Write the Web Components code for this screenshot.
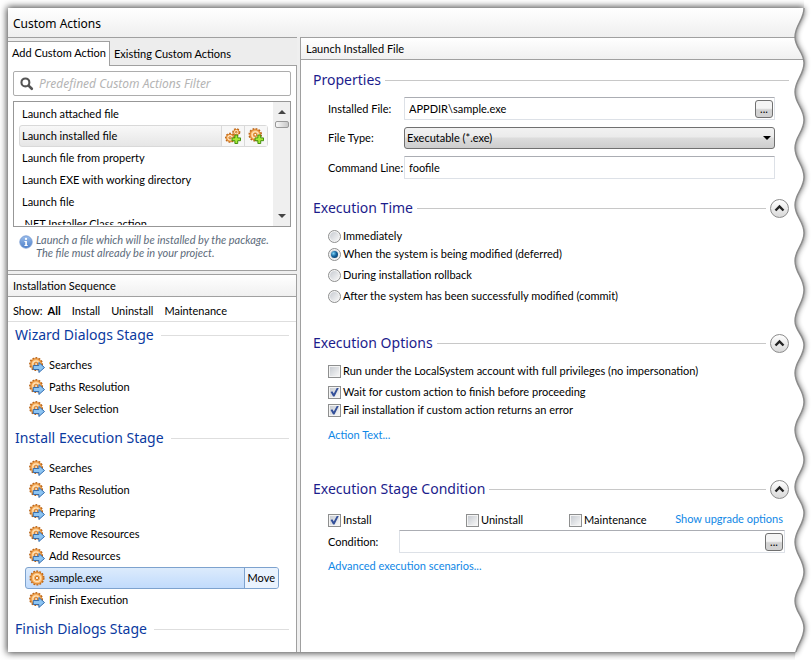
<!DOCTYPE html>
<html lang="en">
<head>
<meta charset="utf-8">
<title>Custom Actions</title>
<style>
  html { background: #fff; }
  body {
    --body: 11px/16px Lato, "Noto Sans", sans-serif;
    --head: 14px/20px "Noto Sans", sans-serif;
    --line: #a0a0a0;
    --link: #0f87e6;
    margin: 0; padding: 8px; color: #000; font: var(--body);
  }
</style>
</head>
<body>
<app-window heading="Custom Actions">
  <div slot="left" style="display:contents">
    <action-library></action-library>
    <install-sequence></install-sequence>
  </div>
  <action-properties slot="right"></action-properties>
</app-window>

<script>
const COMMON = `<style>
  * { box-sizing: border-box; }
  button, input, select { font: inherit; color: inherit; }
  button { background: none; border: 0; padding: 0; margin: 0; white-space: nowrap; }
  a { color: var(--link); text-decoration: none; }
</style>`;

function define(name, build) {
  customElements.define(name, class extends HTMLElement {
    constructor() {
      super();
      this.attachShadow({ mode: 'open' });
    }
    connectedCallback() {
      const t = document.createElement('template');
      t.innerHTML = COMMON + build(this);
      this.shadowRoot.replaceChildren(t.content.cloneNode(true));
    }
  });
}

const gear = (cx, cy, r) => `
  <circle cx="${cx}" cy="${cy}" r="${r}" fill="#f6b768" stroke="#b9651a" stroke-width="2" stroke-dasharray="1.9 1.3"/>
  <circle cx="${cx}" cy="${cy}" r="${r - 0.8}" fill="#fbc079" stroke="#e08a35" stroke-width="1.2"/>
  <circle cx="${cx}" cy="${cy}" r="${r * 0.52}" fill="#f5a74e" stroke="#ffe7c4" stroke-width="1.1"/>
  <circle cx="${cx}" cy="${cy}" r="${r * 0.24}" fill="#fff" stroke="#c96f1c" stroke-width="1"/>`;
const plus = `<path d="M10.5 7.5h3v3h3v3h-3v3h-3v-3h-3v-3h3z" fill="#a6ea35" stroke="#3d8a08" stroke-width="1"/>`;
const ICONS = {
  step: gear(7.5, 7.5, 6.4) + `<path d="M4.5 9h6V5.8l6 5.4-6 5.3v-3.2h-6z" fill="#8cc4f2" stroke="#2b66ad" stroke-width="1"/>`,
  gear: gear(8.5, 8.5, 7),
  add: gear(7.7, 7.2, 6.2) + plus,
  addmany: gear(12, 4.4, 3.3) + gear(5.4, 10.4, 4.4) + plus,
  info: `<defs><linearGradient id="g" x2="0" y2="1"><stop stop-color="#9dbfec"/><stop offset="1" stop-color="#4d7fc9"/></linearGradient></defs>
    <circle cx="8.5" cy="8.5" r="7.5" fill="url(#g)" stroke="#6d94d0"/>
    <circle cx="8.5" cy="4.8" r="1.4" fill="#fff"/><path d="M6.6 7.2h3v5h1v1.3H6.6v-1.3h1V8.5h-1z" fill="#fff"/>`,
  search: `<circle cx="6.8" cy="6.8" r="4.2" fill="none" stroke="#555" stroke-width="2.2"/><path d="M10.2 10.2l3.4 3.4" stroke="#555" stroke-width="2.8" stroke-linecap="round"/>`
};
define('app-icon', el => `
  <style>:host{display:block;flex:none;width:16px;height:16px} svg{display:block;width:100%;height:100%}</style>
  <svg viewBox="0 0 17 17" aria-hidden="true">${ICONS[el.getAttribute('name')]}</svg>`);

/* Wavy torn border along the window's right side, with its shadow. */
define('torn-edge', () => {
  const ys = [8, 37, 63, 92, 120, 148, 177, 205, 233, 261, 290, 321, 345, 373, 402, 430, 460, 487, 513, 542, 572, 601, 628, 658];
  let wave = 'M32 8';
  for (let i = 1; i < ys.length; i++) {
    const a = i % 2 ? 32 : 23, b = i % 2 ? 23 : 32, k = (ys[i] - ys[i - 1]) * 0.42;
    wave += ` C${a} ${ys[i - 1] + k} ${b} ${ys[i] - k} ${b} ${ys[i]}`;
  }
  return `
  <style>
    :host { position: absolute; top: -8px; right: -8px; bottom: -8px; width: 40px; pointer-events: none; }
    svg { display: block; width: 100%; height: 100%; }
  </style>
  <svg viewBox="0 0 40 660" preserveAspectRatio="none" aria-hidden="true">
    <defs>
      <clipPath id="out"><path d="M32 0V8${wave.slice(5)}L23 660H40V0z"/></clipPath>
      <clipPath id="rows"><rect x="-40" y="8" width="90" height="644"/></clipPath>
      <filter id="blur" x="-50%" y="-5%" width="200%" height="110%"><feGaussianBlur stdDeviation="3"/></filter>
    </defs>
    <g clip-path="url(#out)">
      <rect width="40" height="660" fill="#fff"/>
      <g filter="url(#blur)" opacity=".8"><g clip-path="url(#rows)"><path d="${wave}H-40V8z"/></g></g>
    </g>
    <g clip-path="url(#rows)"><path d="${wave}" fill="none" stroke="#8c8c8c" stroke-width="1.4"/></g>
  </svg>`;
});

define('app-window', el => `
  <style>
    :host { position: relative; display: flex; flex-direction: column; min-height: calc(100vh - 16px);
      background: #efefef; box-shadow: 0 0 7px 1px rgba(0,0,0,.75); }
    header { padding: 6px 5px 3px; background: linear-gradient(#fff, #efefef); }
    h1 { margin: 0; font: 12px/20px "Noto Sans", sans-serif; }
    .cols { flex: 1; display: flex; gap: 3px; }
    .left { flex: 0 0 289px; display: flex; flex-direction: column; gap: 3px; }
    .right { flex: 1; min-width: 0; display: flex; }
  </style>
  <header><h1>${el.getAttribute('heading')}</h1></header>
  <div class="cols"><div class="left"><slot name="left"></slot></div><main class="right"><slot name="right"></slot></main></div>
  <torn-edge></torn-edge>`);

define('panel-header', () => `
  <style>:host{display:block;padding:0 5px;border-top:1px solid var(--line);border-bottom:1px solid var(--line);background:linear-gradient(#fff,#f0f0f0)}
  h2{margin:0;font:inherit;line-height:21px}</style><h2><slot></slot></h2>`);

define('action-item', el => `
  <style>
    :host { display: flex; height: 22px; padding: 0 2px; line-height: 20px; border: 1px solid transparent; border-radius: 3px; }
    :host([selected]) { padding-right: 0; border-color: #d9d9d9; background: linear-gradient(#f8f8f8, #e6e6e6); }
    span { flex: 1; white-space: nowrap; }
    button { display: grid; place-items: center; width: 23px; border-left: 1px solid #d9d9d9; background: #f7f7f7; }
  </style>
  <span><slot></slot></span>
  ${el.hasAttribute('selected') ? `
  <button aria-label="Add with sequence"><app-icon name="addmany"></app-icon></button>
  <button aria-label="Add without sequence"><app-icon name="add"></app-icon></button>` : ''}`);

define('action-library', () => `
  <style>
    :host { display: block; border-top: 1px solid var(--line); }
    .tabs { display: flex; align-items: flex-end; height: 28px; background: #ededed; }
    .tabs button { height: 24px; padding: 0 3px 0 4px; border-bottom: 1px solid var(--line); }
    .tabs .on { height: 25px; padding-bottom: 2px; background: #fff; border: 1px solid var(--line); border-width: 1px 1px 0 0; }
    .tabs .rest { flex: 1; padding: 0 4px; text-align: left; }
    .body { padding: 5px; background: #fff; border: 1px solid var(--line); border-width: 0 1px 1px 0; }
    .filter { display: flex; align-items: center; gap: 4px; height: 25px; padding: 0 5px; border: 1px solid #adadad; border-radius: 2px; }
    .filter input { flex: 1; min-width: 0; border: 0; padding: 0; outline: 0; background: none; font: italic 12px/16px "Noto Sans", sans-serif; }
    .filter input::placeholder { color: #b4b4b4; opacity: 1; }
    .list { display: flex; height: 126px; margin-top: 5px; border: 1px solid #979797; }
    .items { flex: 1; padding: 1px 5px; height: 123px; overflow: hidden; }
    .bar { display: flex; flex-direction: column; align-items: center; width: 17px; padding: 8px 1px; background: #efefef; }
    .bar i { border: 4px solid transparent; }
    .up { border-top: 0 !important; border-bottom-color: #444 !important; }
    .down { margin-top: auto; border-bottom: 0 !important; border-top-color: #444 !important; }
    .thumb { width: 14px; height: 7px; margin-top: 7px; border: 1px solid #999; border-radius: 2px; background: linear-gradient(90deg, #f8f8f8, #c8c8c8); }
    .info { display: flex; gap: 3px; margin: 6px 0; padding-left: 6px; color: #5d6b7b; font-style: italic; line-height: 13px; }
    .info app-icon { width: 14px; height: 14px; margin-top: 2px; }
    .info p { margin: 0; white-space: nowrap; }
  </style>
  <div class="tabs" role="tablist"><button class="on" role="tab" aria-selected="true">Add Custom Action</button><button class="rest" role="tab">Existing Custom Actions</button></div>
  <div class="body">
    <label class="filter"><app-icon name="search"></app-icon><input aria-label="Filter" placeholder="Predefined Custom Actions Filter"></label>
    <div class="list">
      <div class="items">
        <action-item>Launch attached file</action-item>
        <action-item selected>Launch installed file</action-item>
        <action-item>Launch file from property</action-item>
        <action-item>Launch EXE with working directory</action-item>
        <action-item>Launch file</action-item>
        <action-item>.NET Installer Class action</action-item>
      </div>
      <div class="bar" aria-hidden="true"><i class="up"></i><div class="thumb"></div><i class="down"></i></div>
    </div>
    <div class="info"><app-icon name="info"></app-icon><p>Launch a file which will be installed by the package.<br>The file must already be in your project.</p></div>
  </div>`);

define('stage-group', el => `
  <style>
    :host { display: block; }
    .head { display: flex; align-items: center; gap: 7px; height: 26px; margin-bottom: 6px; padding: 0 7px; }
    h3 { margin: 0; font: var(--head); color: #0b3aa0; }
    .head::after { content: ""; flex: 1; border-top: 1px solid #dedede; }
    .items { margin: 0 17px; }
  </style>
  <div class="head"><h3>${el.getAttribute('heading')}</h3></div><div class="items"><slot></slot></div>`);

define('stage-item', el => `
  <style>
    :host { display: flex; align-items: center; gap: 4px; height: 22px; padding-left: 3px; border: 1px solid transparent; border-radius: 3px; }
    :host([selected]) { border-color: #7da2ce; background: linear-gradient(#dcebfc, #c1dbfc); }
    span { flex: 1; }
    button { align-self: stretch; padding: 0 3px; border-left: 1px solid #7da2ce; background: #eaf3fe; border-radius: 0 2px 2px 0; }
  </style>
  <app-icon name="${el.hasAttribute('selected') ? 'gear' : 'step'}"></app-icon><span><slot></slot></span>
  ${el.hasAttribute('selected') ? '<button>Move</button>' : ''}`);

define('install-sequence', () => `
  <style>
    :host { flex: 1; display: block; background: #fff; border-right: 1px solid var(--line); }
    nav { display: flex; gap: 11px; height: 25px; padding: 5px; border-bottom: 1px solid #dedede; line-height: 18px; }
    nav b { font-weight: 700; }
    nav div { display: flex; gap: 5px; }
    stage-group + stage-group { margin-top: 5px; }
  </style>
  <panel-header>Installation Sequence</panel-header>
  <nav><div><span>Show:</span><button><b>All</b></button></div><button>Install</button><button>Uninstall</button><button>Maintenance</button></nav>
  <stage-group heading="Wizard Dialogs Stage"><stage-item>Searches</stage-item><stage-item>Paths Resolution</stage-item><stage-item>User Selection</stage-item></stage-group>
  <stage-group heading="Install Execution Stage">
    <stage-item>Searches</stage-item><stage-item>Paths Resolution</stage-item><stage-item>Preparing</stage-item><stage-item>Remove Resources</stage-item>
    <stage-item>Add Resources</stage-item><stage-item selected>sample.exe</stage-item><stage-item>Finish Execution</stage-item>
  </stage-group>
  <stage-group heading="Finish Dialogs Stage"></stage-group>`);

define('prop-section', el => `
  <style>
    :host { display: block; }
    .head { display: flex; align-items: center; gap: 4px; height: 20px; padding: 0 15px 0 12px; }
    h3 { order: 0; margin: 0; font: var(--head); color: #1c1c8c; }
    .head::before { content: ""; order: 1; flex: 1; border-top: 1px solid #c8c8c8; }
    button { order: 2; display: grid; place-items: center; width: 19px; height: 19px; border: 1px solid #8c8c8c; border-radius: 50%; background: linear-gradient(#fff, #d8d8d8); }
    svg { display: block; width: 11px; height: 9px; }
  </style>
  <div class="head"><h3>${el.getAttribute('heading')}</h3>${el.hasAttribute('fixed') ? '' :
    '<button aria-label="Collapse"><svg viewBox="0 0 11 9"><path d="M1.5 6.5l4-4 4 4" fill="none" stroke="#222" stroke-width="2.4"/></svg></button>'}</div>
  <slot></slot>`);

define('field-row', el => {
  const kind = el.getAttribute('kind'), value = el.getAttribute('value') || '';
  return `
  <style>
    :host { display: grid; grid-template-columns: var(--label, 76px) 1fr; align-items: center; padding: 0 29px 0 27px; }
    label { white-space: nowrap; }
    .box { display: flex; align-items: center; height: 23px; padding: 0 1px 0 4px; border: 1px solid #dde1e7; border-top-color: #abadb3; border-radius: 1px; background: #fff; }
    input { flex: 1; min-width: 0; border: 0; padding: 0; outline: 0; background: none; }
    .browse { width: 18px; height: 18px; border: 1px solid #707070; border-radius: 3px; background: linear-gradient(#f4f4f4 45%, #d2d2d2 55%); line-height: 14px; }
    .pick { position: relative; display: block; }
    select { appearance: none; display: block; width: 100%; height: 22px; padding: 0 2px; border: 1px solid #707070; border-radius: 3px; background: linear-gradient(#f2f2f2, #ebebeb 45%, #dcdcdc 50%, #cdcdcd); }
    .pick::after { content: ""; position: absolute; right: 4px; top: 9px; border: 4px solid transparent; border-top-color: #000; border-bottom: 0; }
  </style>
  <label for="f">${el.getAttribute('label')}</label>
  ${kind === 'select' ? `<span class="pick"><select id="f"><option>${value}</option></select></span>`
    : `<span class="box"><input id="f" value="${value}">${kind === 'browse' ? '<button class="browse" aria-label="Browse">...</button>' : ''}</span>`}`;
});

define('action-properties', () => `
  <style>
    :host { flex: 1; display: block; background: #fff; border-left: 1px solid var(--line); }
    .s1 { margin-top: 10px; } .s2 { margin-top: 19px; } .s3 { margin-top: 28px; } .s4 { margin-top: 31px; }
    .rows { display: grid; gap: 7px; padding-top: 7px; }
    .opts { display: grid; justify-items: start; padding: 9px 27px 0; }
    .gap { margin-top: 3px; }
    label { display: flex; align-items: center; gap: 2px; height: 18px; white-space: nowrap; }
    input { appearance: none; display: grid; place-items: center; flex: none; width: 13px; height: 13px; margin: 0; border: 1px solid #8e8f8f; background: #f4f4f4; }
    input::before { content: ""; grid-area: 1/1; width: 9px; height: 9px; background: linear-gradient(135deg, #c8ccd2, #f6f6f6); }
    input::after { content: ""; grid-area: 1/1; width: 9px; height: 9px; }
    [type=checkbox]:checked::after { background: #34509a; clip-path: polygon(6% 50%, 26% 42%, 42% 66%, 78% 0, 100% 0, 50% 100%, 34% 100%); }
    [type=radio], [type=radio]::before { border-radius: 50%; }
    [type=radio]:checked::after { width: 7px; height: 7px; border-radius: 50%; background: radial-gradient(circle at 35% 35%, #7fd4f5, #14639e 45%, #0b2f52); }
    .stage { display: grid; grid-template-columns: 138px 103px 1fr auto; padding: 12px 21px 1px 27px; }
    .stage a { line-height: 16px; }
    .cond { --label: 71px; padding-right: 19px; }
    .links { padding: 5px 27px; }
    .opts + .links { padding-top: 8px; }
  </style>
  <panel-header>Launch Installed File</panel-header>
  <prop-section class="s1" heading="Properties" fixed>
    <div class="rows">
      <field-row label="Installed File:" kind="browse" value="APPDIR\\sample.exe"></field-row>
      <field-row label="File Type:" kind="select" value="Executable (*.exe)"></field-row>
      <field-row label="Command Line:" value="foofile"></field-row>
    </div>
  </prop-section>
  <prop-section class="s2" heading="Execution Time">
    <div class="opts">
      <label><input type="radio" name="t">Immediately</label>
      <label><input type="radio" name="t" checked>When the system is being modified (deferred)</label>
      <label class="gap"><input type="radio" name="t">During installation rollback</label>
      <label class="gap"><input type="radio" name="t">After the system has been successfully modified (commit)</label>
    </div>
  </prop-section>
  <prop-section class="s3" heading="Execution Options">
    <div class="opts">
      <label><input type="checkbox">Run under the LocalSystem account with full privileges (no impersonation)</label>
      <label class="gap"><input type="checkbox" checked>Wait for custom action to finish before proceeding</label>
      <label><input type="checkbox" checked>Fail installation if custom action returns an error</label>
    </div>
    <div class="links"><a href="#text">Action Text...</a></div>
  </prop-section>
  <prop-section class="s4" heading="Execution Stage Condition">
    <div class="stage">
      <label><input type="checkbox" checked>Install</label>
      <label><input type="checkbox">Uninstall</label>
      <label><input type="checkbox">Maintenance</label>
      <a href="#upgrade">Show upgrade options</a>
    </div>
    <field-row class="cond" label="Condition:" kind="browse"></field-row>
    <div class="links"><a href="#advanced">Advanced execution scenarios...</a></div>
  </prop-section>`);
</script>
</body>
</html>
